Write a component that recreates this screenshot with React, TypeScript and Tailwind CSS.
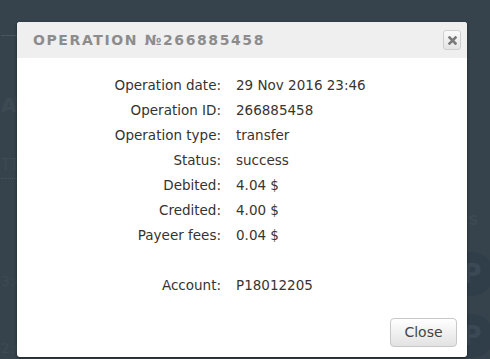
import React from 'react';

const rows: [string, string][] = [
  ['Operation date:', '29 Nov 2016 23:46'],
  ['Operation ID:', '266885458'],
  ['Operation type:', 'transfer'],
  ['Status:', 'success'],
  ['Debited:', '4.04 $'],
  ['Credited:', '4.00 $'],
  ['Payeer fees:', '0.04 $'],
  ['', ''],
  ['Account:', 'P18012205'],
];

function Coin() {
  return (
    <div className="w-[44px] h-[44px] rounded-full bg-[#2f3e49] flex items-center justify-center text-[26px] font-bold text-[#3a4955]">
      P
    </div>
  );
}

export default function App() {
  return (
    <div
      className="relative w-[490px] h-[359px] overflow-hidden bg-[#36434c]"
      style={{ fontFamily: '"DejaVu Sans", "Liberation Sans", sans-serif' }}
    >
      {/* page behind the overlay */}
      <div className="flex justify-between h-full">
        <div className="flex flex-col w-[120px] pl-[1px] text-[#3d4a53]">
          <div className="mt-[35px] h-px w-[17px] bg-[#48555d]" />
          <div className="mt-[54px] text-[20px] font-bold whitespace-nowrap">ATIONS</div>
          <div className="mt-[34px] text-[15px] whitespace-nowrap">TT TT</div>
          <div className="mt-[2px] w-[40px] border-t border-dotted border-[#48555d]" />
          <div className="mt-[92px] text-[14px] whitespace-nowrap">3:46</div>
          <div className="mt-[46px] text-[14px] whitespace-nowrap">2:05</div>
        </div>
        <div className="flex flex-col items-start w-[60px] text-[#3c4952]">
          <div className="mt-[210px] text-[14px] font-bold pl-[28px]">PS</div>
          <div className="mt-[21px] pl-[20px]"><Coin /></div>
          <div className="mt-[18px] pl-[20px]"><Coin /></div>
        </div>
      </div>

      {/* modal */}
      <div className="absolute left-[17px] top-[22px] w-[450px] h-[335px] bg-white rounded-[3px] shadow-[0_1px_3px_rgba(0,0,0,0.5)] overflow-hidden flex flex-col">
        <div className="h-[36px] bg-[#efefef] flex items-center justify-between pl-[16px] pr-[6px]">
          <div className="text-[14px] font-semibold tracking-[1.6px] text-[#8c8c8c]">OPERATION №266885458</div>
          <button className="w-[18px] h-[20px] rounded-[3px] border border-[#cfcfcf] bg-gradient-to-b from-[#fafafa] to-[#e4e4e4] flex items-center justify-center">
            <svg width="9" height="9" viewBox="0 0 9 9">
              <path d="M1.5 1.5 L7.5 7.5 M7.5 1.5 L1.5 7.5" stroke="#7a7a7a" strokeWidth="2.6" strokeLinecap="square" />
            </svg>
          </button>
        </div>
        <div className="pt-[15px] flex flex-col">
          {rows.map(([label, value], i) => (
            <div key={i} className="h-[25px] flex items-center text-[13.5px] text-[#333]">
              <div className="w-[204px] text-right">{label}</div>
              <div className="pl-[15px] text-[#3a3430]">{value}</div>
            </div>
          ))}
        </div>
        <div className="flex justify-end pr-[10px] pt-[20px]">
          <button className="w-[67px] h-[29px] rounded-[4px] border border-[#c8c8c8] bg-gradient-to-b from-[#ffffff] to-[#e2e2e2] text-[14px] text-[#444]">
            Close
          </button>
        </div>
      </div>
    </div>
  );
}
